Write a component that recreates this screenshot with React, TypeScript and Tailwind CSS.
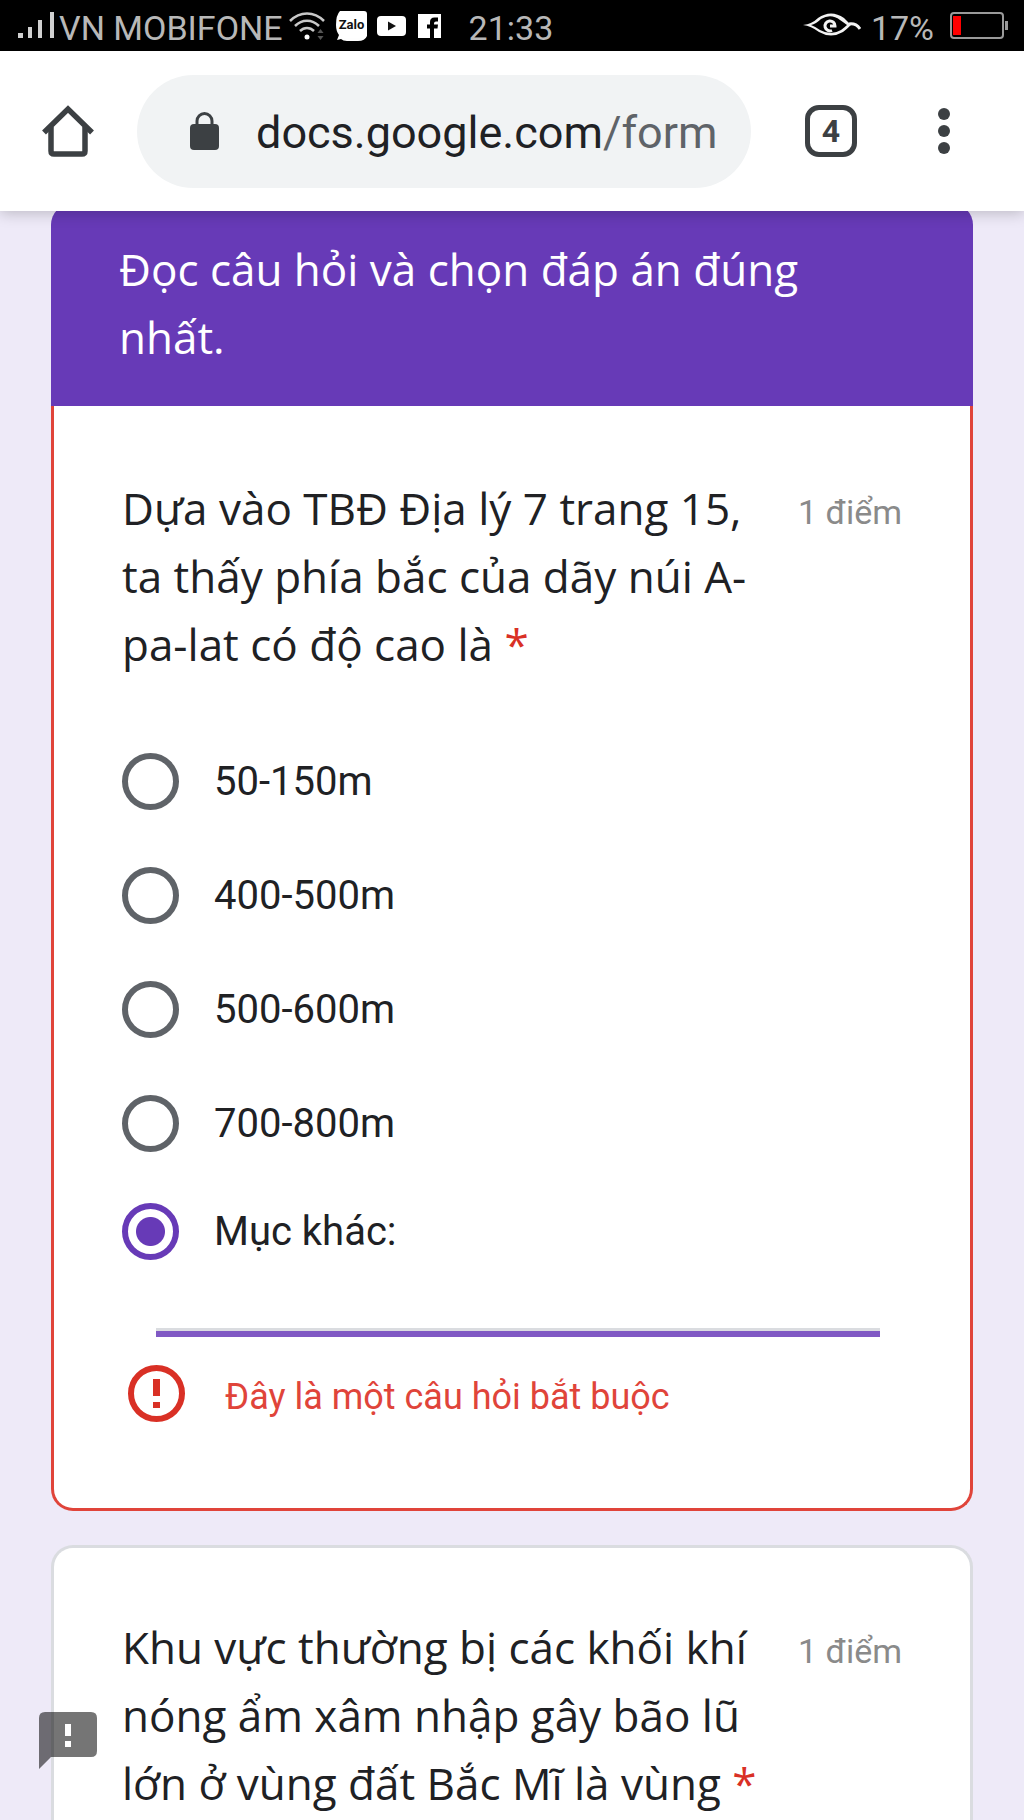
import { useState } from "react";

interface Question {
  id: string;
  title: string;
  points: string;
  options: string[];
  error?: string;
}

const questions: Question[] = [
  {
    id: "q1",
    title: "Dựa vào TBĐ Địa lý 7 trang 15, ta thấy phía bắc của dãy núi A-pa-lat có độ cao là",
    points: "1 điểm",
    options: ["50-150m", "400-500m", "500-600m", "700-800m"],
    error: "Đây là một câu hỏi bắt buộc",
  },
  {
    id: "q2",
    title: "Khu vực thường bị các khối khí nóng ẩm xâm nhập gây bão lũ lớn ở vùng đất Bắc Mĩ là vùng",
    points: "1 điểm",
    options: [],
  },
];

const StatusBar = () => (
  <div className="flex h-[51px] items-center bg-black pr-4 pl-[18px] text-[34px] leading-none text-[#b8b8b8]">
    <svg className="h-[28px] w-[37px]" viewBox="0 0 37 28" fill="#d0d0d0">
      <rect x="0" y="21" width="5" height="5" />
      <rect x="10" y="15" width="4" height="11" />
      <rect x="20" y="8" width="4" height="18" />
      <rect x="32" y="0" width="4" height="26" />
    </svg>
    <span className="ml-1 pt-1">VN MOBIFONE</span>
    <svg
      className="ml-1.5 h-[30px] w-[37px]"
      viewBox="0 0 37 30"
      fill="none"
      stroke="#c8c8c8"
      strokeWidth="2.5"
    >
      <path d="M1 10C11 0 25 0 35 10M6 15c7-7 17-7 24 0M11 20c4-4 10-4 14 0" />
      <circle cx="18" cy="26" r="2.5" fill="#fff" stroke="none" />
      <path d="M28.500 22l3-4 3 4zM28.500 25l3 4 3-4z" fill="#555" stroke="none" />
    </svg>
    <svg className="ml-2.5 h-[32px] w-[31px]" viewBox="0 0 31 32">
      <path
        d="M4 1h24q3 0 3 3v22q-2 5-9 5H11q-4 0-6-2l-4 1 2-5Q0 21 0 15 0 5 4 1z"
        fill="#fff"
      />
      <text
        x="15.500"
        y="19"
        textAnchor="middle"
        fontSize="13"
        fontWeight="700"
        fill="#111"
      >
        Zalo
      </text>
    </svg>
    <svg className="ml-2.5 h-[20px] w-[29px]" viewBox="0 0 29 20">
      <rect width="29" height="20" rx="4" fill="#fff" />
      <path d="M11 5.500l8 4.500-8 4.500z" fill="#111" />
    </svg>
    <svg className="ml-3 h-[24px] w-[23px]" viewBox="0 0 23 24">
      <path d="M0 0h23v24H0z" fill="#fff" />
      <path
        d="M12 24v-9.500H9v-4h3V8q0-4.500 4.500-4.500H20v4h-2q-2 0-2 2v1h4l-.5 4H16V24z"
        fill="#000"
      />
    </svg>
    <span className="ml-7 pt-1">21:33</span>
    <svg
      className="ml-auto h-[26px] w-[58px]"
      viewBox="0 0 58 26"
      fill="none"
      stroke="#f2f2f2"
      strokeWidth="3"
    >
      <path
        d="M0 12Q9 11 15 5 28-4 41 5q4 4 7 7-4 4-8 7-12 7-24 0Q8 13 0 12zM8 12q5 2 9 5 11 6 21 0 4-3 6-5-4-3-7-5Q28 0 18 6q-5 5-10 6z"
        fill="#f2f2f2"
        fillRule="evenodd"
        stroke="none"
      />
      <path d="M46 11q7-1 11 5" />
      <path d="M29 17.500A5 5 0 1 1 32 13l-5 0" />
    </svg>
    <span className="ml-2.5 pt-1">17%</span>
    <svg className="ml-4 h-[28px] w-[58px]" viewBox="0 0 58 28">
      <rect
        x="1"
        y="1"
        width="52"
        height="25"
        rx="3"
        fill="none"
        stroke="#9a9a9a"
        strokeWidth="2"
      />
      <rect x="55" y="9" width="3" height="9" fill="#9a9a9a" />
      <rect x="3" y="4" width="8" height="19" fill="#f00" />
    </svg>
  </div>
);

const BrowserBar = () => (
  <header className="relative z-10 flex h-[160px] items-center bg-white pr-[73px] pl-[42px] shadow-[0_2px_14px_rgba(0,0,0,0.22)]">
    <button type="button" aria-label="Trang chủ">
      <svg
        className="h-[52px] w-[52px]"
        viewBox="0 0 52 52"
        fill="none"
        stroke="#3c4043"
        strokeWidth="5.500"
      >
        <path d="M2 27.500L26 4l24 23.500" />
        <path d="M9 22v24q0 3 3 3h28q3 0 3-3V22" />
      </svg>
    </button>
    <button
      type="button"
      className="ml-[43px] flex h-[113px] min-w-0 flex-1 items-center rounded-full bg-[#f1f3f4] pl-[53px] text-[45px] text-[#202124]"
    >
      <svg className="h-[38px] w-[29px]" viewBox="0 0 29 38" fill="#3c4043">
        <rect y="12" width="29" height="26" rx="4" />
        <path
          d="M7 14V9a7.500 7.500 0 0 1 15 0v5"
          fill="none"
          stroke="#3c4043"
          strokeWidth="3"
        />
      </svg>
      <span className="ml-[37px] pt-1">
        docs.google.com<span className="text-[#5f6368]">/form</span>
      </span>
    </button>
    <button
      type="button"
      aria-label="Thẻ đang mở"
      className="ml-[54px] flex h-[52px] w-[52px] items-center justify-center rounded-[14px] border-[5px] border-[#3c4043] text-[32px] leading-none font-bold text-[#3c4043]"
    >
      4
    </button>
    <button type="button" aria-label="Menu" className="ml-[80px]">
      <svg className="h-[48px] w-[14px]" viewBox="0 0 14 48" fill="#3c4043">
        <circle cx="7" cy="7" r="6" />
        <circle cx="7" cy="24" r="6" />
        <circle cx="7" cy="41" r="6" />
      </svg>
    </button>
  </header>
);

const QuestionTitle = ({ question }: { question: Question }) => (
  <div className="flex items-start justify-between gap-6">
    <h2
      id={question.id}
      className="flex-1 font-['Open_Sans',sans-serif] text-[44px] leading-[68px] text-[#202124]"
    >
      {question.title} <span className="text-[#d93025]">*</span>
    </h2>
    <span className="text-[34px] leading-[76px] text-[#8a8a8a]">
      {question.points}
    </span>
  </div>
);

const radioClass =
  "h-[57px] w-[57px] shrink-0 appearance-none rounded-full border-[6px] border-[#5f6368] checked:border-[#673ab7] checked:bg-[radial-gradient(circle,#673ab7_14px,transparent_15px)]";

export default function App() {
  const [answer, setAnswer] = useState("other");
  const [otherText, setOtherText] = useState("");
  const [first, second] = questions;

  return (
    <div className="flex min-h-screen flex-col bg-[#eeeaf8] font-[Roboto,sans-serif]">
      <StatusBar />
      <BrowserBar />

      <main className="flex flex-1 flex-col px-[51px]">
        {/* Section heading, partly scrolled under the browser bar */}
        <div className="-mt-2 rounded-t-[22px] bg-[#673ab7] px-[68px] pt-8 pb-[35px]">
          <h1 className="font-['Open_Sans',sans-serif] text-[44px] leading-[68px] text-white">
            Đọc câu hỏi và chọn đáp án đúng nhất.
          </h1>
        </div>

        <section className="rounded-b-[22px] border-3 border-t-0 border-[#e0443a] bg-white px-[68px] pt-[68px] pb-[82px]">
          <QuestionTitle question={first} />

          <div
            role="radiogroup"
            aria-labelledby={first.id}
            className="mt-[75px] flex flex-col gap-[57px] text-[40px] leading-[57px] text-[#202124]"
          >
            {first.options.map((option) => (
              <label key={option} className="flex items-center gap-[35px]">
                <input
                  type="radio"
                  name={first.id}
                  className={radioClass}
                  checked={answer === option}
                  onChange={() => setAnswer(option)}
                />
                {option}
              </label>
            ))}
          </div>

          <label className="mt-[51px] flex items-center gap-[35px] text-[40px] leading-[57px] text-[#202124]">
            <input
              type="radio"
              name={first.id}
              className={radioClass}
              checked={answer === "other"}
              onChange={() => setAnswer("other")}
            />
            Mục khác:
          </label>

          <div className="mr-[22px] ml-[34px] border-b-[6px] border-[#8059c4]">
            <input
              type="text"
              aria-label="Mục khác"
              value={otherText}
              onChange={(e) => setOtherText(e.target.value)}
              className="block h-[71px] w-full border-b-3 border-[#dadce0] text-[40px] text-[#202124] outline-none"
            />
          </div>

          <div
            role="alert"
            className="mt-6 ml-[6px] flex items-center gap-[40px] text-[36px] leading-[57px] text-[#e0443a]"
          >
            <svg className="h-[57px] w-[57px]" viewBox="0 0 57 57" fill="#d93025">
              <circle
                cx="28.500"
                cy="28.500"
                r="25.500"
                fill="none"
                stroke="#d93025"
                strokeWidth="6"
              />
              <path d="M25 14h7v17h-7zM25 37h7v6h-7z" />
            </svg>
            <span className="pt-2">{first.error}</span>
          </div>
        </section>

        <section className="mt-[34px] flex-1 rounded-t-[22px] border-3 border-b-0 border-[#dadce0] bg-white px-[68px] pt-[65px]">
          <QuestionTitle question={second} />
        </section>
      </main>

      <button
        type="button"
        aria-label="Báo cáo vấn đề"
        className="fixed bottom-[51px] left-[39px]"
      >
        <svg className="h-[58px] w-[58px]" viewBox="0 0 58 58">
          <path
            d="M6 1h46q6 0 6 6v33q0 6-6 6H12L0 58V7q0-6 6-6z"
            fill="#000"
            fillOpacity="0.540"
          />
          <path d="M26 13h6v12h-6zM26 30h6v6h-6z" fill="#fff" />
        </svg>
      </button>
    </div>
  );
}
